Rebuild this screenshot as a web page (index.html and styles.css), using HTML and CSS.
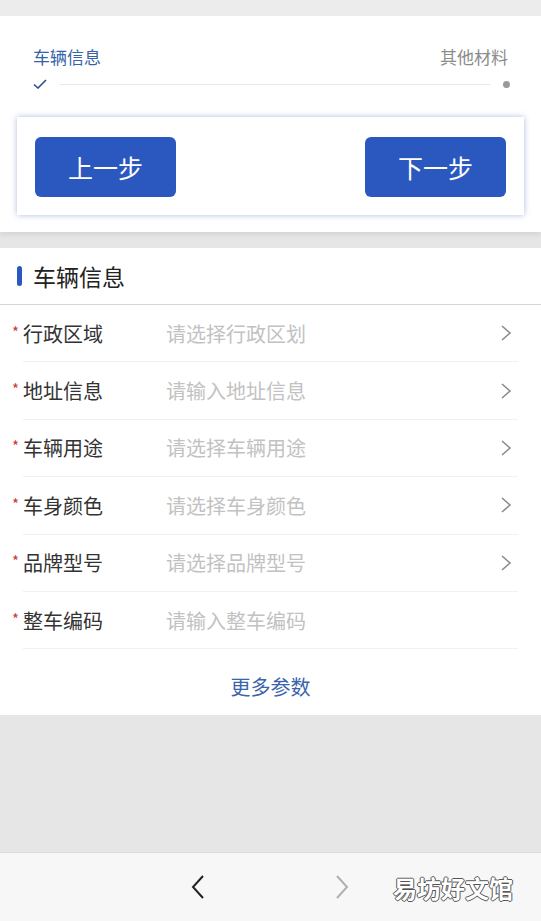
FILE: index.html
```html
<!DOCTYPE html>
<html lang="zh-CN">
<head>
    <meta charset="UTF-8">
    <meta name="viewport" content="width=device-width, initial-scale=1.0">
    <title>车辆信息</title>
    <link rel="stylesheet" href="styles.css">
</head>
<body>
    <div class="steps">
        <div class="step-labels">
            <span class="step-current">车辆信息</span>
            <span class="step-next">其他材料</span>
        </div>
        <div class="step-track">
            <svg class="step-check" width="14" height="10" viewBox="0 0 14 10">
                <path d="M1 5.5 L5 9 L13 1" fill="none" stroke="#2f4f8a" stroke-width="1.6"/>
            </svg>
            <div class="step-line"></div>
            <div class="step-dot"></div>
        </div>
        <div class="step-card">
            <button class="btn">上一步</button>
            <button class="btn">下一步</button>
        </div>
    </div>

    <div class="section">
        <div class="section-title">车辆信息</div>
        <div class="field">
            <span class="star">*</span>
            <span class="label">行政区域</span>
            <span class="value">请选择行政区划</span>
            <svg class="arrow" width="12" height="18" viewBox="0 0 12 18"><path d="M2 2 L10 9 L2 16" fill="none" stroke="#8a8a8a" stroke-width="1.6"/></svg>
        </div>
        <div class="field">
            <span class="star">*</span>
            <span class="label">地址信息</span>
            <span class="value">请输入地址信息</span>
            <svg class="arrow" width="12" height="18" viewBox="0 0 12 18"><path d="M2 2 L10 9 L2 16" fill="none" stroke="#8a8a8a" stroke-width="1.6"/></svg>
        </div>
        <div class="field">
            <span class="star">*</span>
            <span class="label">车辆用途</span>
            <span class="value">请选择车辆用途</span>
            <svg class="arrow" width="12" height="18" viewBox="0 0 12 18"><path d="M2 2 L10 9 L2 16" fill="none" stroke="#8a8a8a" stroke-width="1.6"/></svg>
        </div>
        <div class="field">
            <span class="star">*</span>
            <span class="label">车身颜色</span>
            <span class="value">请选择车身颜色</span>
            <svg class="arrow" width="12" height="18" viewBox="0 0 12 18"><path d="M2 2 L10 9 L2 16" fill="none" stroke="#8a8a8a" stroke-width="1.6"/></svg>
        </div>
        <div class="field">
            <span class="star">*</span>
            <span class="label">品牌型号</span>
            <span class="value">请选择品牌型号</span>
            <svg class="arrow" width="12" height="18" viewBox="0 0 12 18"><path d="M2 2 L10 9 L2 16" fill="none" stroke="#8a8a8a" stroke-width="1.6"/></svg>
        </div>
        <div class="field">
            <span class="star">*</span>
            <span class="label">整车编码</span>
            <span class="value">请输入整车编码</span>
        </div>
        <div class="more">更多参数</div>
    </div>

    <div class="filler"></div>

    <div class="toolbar">
        <svg width="20" height="28" viewBox="0 0 20 28"><path d="M15 3 L5 14 L15 25" fill="none" stroke="#222" stroke-width="2"/></svg>
        <svg width="20" height="28" viewBox="0 0 20 28"><path d="M5 3 L15 14 L5 25" fill="none" stroke="#b0b0b0" stroke-width="2"/></svg>
        <span class="watermark">易坊好文馆</span>
    </div>
</body>
</html>
```

FILE: styles.css
```css
body {
    font-family: "Noto Sans CJK SC", "Noto Sans", sans-serif;
    background-color: #e6e6e6;
    margin: 0;
    height: 921px;
    display: flex;
    flex-direction: column;
    border-top: 16px solid #ececec;
    box-sizing: border-box;
}
.steps {
    background-color: #fff;
    padding: 31px 17px 17px;
    box-shadow: 0 3px 5px rgba(0, 0, 0, 0.08);
}
.step-labels {
    display: flex;
    justify-content: space-between;
    padding: 0 16px;
    font-size: 17px;
    line-height: 20px;
}
.step-current {
    color: #3563a8;
}
.step-next {
    color: #8c8c8c;
}
.step-track {
    display: flex;
    align-items: center;
    height: 12px;
    margin-top: 11px;
    padding: 0 14px 0 16px;
}
.step-line {
    flex: 1;
    height: 1px;
    background-color: #e8e8e8;
    margin: 0 13px;
}
.step-dot {
    width: 7px;
    height: 7px;
    border-radius: 50%;
    background-color: #999;
}
.step-card {
    display: flex;
    justify-content: space-between;
    margin-top: 27px;
    padding: 20px 18px 18px;
    background-color: #fff;
    box-shadow: 0 0 6px rgba(60, 90, 170, 0.4);
}
.btn {
    width: 141px;
    height: 60px;
    border: none;
    border-radius: 6px;
    background-color: #2b58bf;
    color: #fff;
    font-family: inherit;
    font-size: 25px;
}
.section {
    margin-top: 16px;
    background-color: #fff;
}
.section-title {
    display: flex;
    align-items: center;
    height: 56px;
    padding-left: 17px;
    border-bottom: 1px solid #d4d4d4;
    font-size: 23px;
    color: #222;
}
.section-title::before {
    content: "";
    width: 5px;
    height: 20px;
    border-radius: 3px;
    background-color: #2b58bf;
    margin-right: 11px;
}
.field {
    display: flex;
    align-items: center;
    height: 57.4px;
    box-sizing: border-box;
    margin: 0 23px;
    border-bottom: 1px solid #f0f0f0;
}
.star {
    width: 11px;
    margin-left: -11px;
    color: #c83a3a;
    font-size: 15px;
    line-height: 1;
    padding-bottom: 4px;
}
.label {
    width: 143px;
    font-size: 20px;
    color: #333;
}
.value {
    flex: 1;
    font-size: 20px;
    color: #c2c2c2;
}
.arrow {
    margin-right: 6px;
}
.more {
    height: 66px;
    display: flex;
    align-items: center;
    justify-content: center;
    padding-top: 8px;
    box-sizing: border-box;
    font-size: 20px;
    color: #3a63ab;
}
.filler {
    flex: 1;
}
.toolbar {
    position: relative;
    height: 68px;
    display: flex;
    align-items: center;
    gap: 124px;
    padding-left: 188px;
    background-color: #f7f7f7;
    border-top: 1px solid #dcdcdc;
}
.watermark {
    position: absolute;
    left: 393px;
    top: 20px;
    font-size: 24px;
    line-height: 30px;
    font-weight: bold;
    color: #fff;
    text-shadow: -1px 0 #555, 1px 0 #555, 0 -1px #555, 0 1px #555;
}
```
